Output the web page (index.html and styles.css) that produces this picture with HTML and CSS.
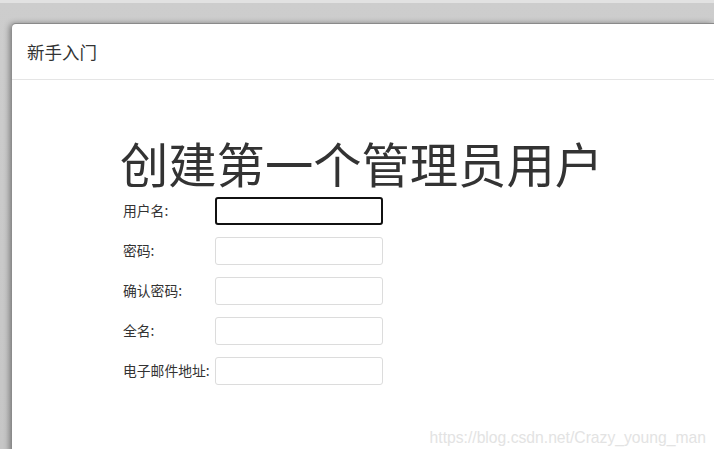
FILE: index.html
```html
<!DOCTYPE html>
<html lang="zh-CN">
<head>
<meta charset="utf-8">
<title>新手入门</title>
<link rel="stylesheet" href="styles.css">
</head>
<body>
<div class="window">
  <div class="header">新手入门</div>
  <div class="content">
    <h1 class="title">创建第一个管理员用户</h1>
    <form class="form">
      <div class="row"><label class="label">用户名:</label><input class="input focused" type="text"></div>
      <div class="row"><label class="label">密码:</label><input class="input" type="password"></div>
      <div class="row"><label class="label">确认密码:</label><input class="input" type="password"></div>
      <div class="row"><label class="label">全名:</label><input class="input" type="text"></div>
      <div class="row"><label class="label">电子邮件地址:</label><input class="input" type="text"></div>
    </form>
  </div>
  <div class="watermark">https://blog.csdn.net/Crazy_young_man</div>
</div>
</body>
</html>
```
FILE: styles.css
```css
html, body {
  margin: 0;
  height: 100%;
  overflow: hidden;
}
body {
  background: linear-gradient(#e2e2e2 0, #e2e2e2 3px, #cdcdcd 3px, #c6c6c6 100%);
  font-family: "Noto Sans CJK SC", "Liberation Sans", sans-serif;
  color: #333;
}
.window {
  position: relative;
  margin: 24px 0 0 12px;
  height: 430px;
  background: #fff;
  border-radius: 4px 0 0 0;
  box-shadow: 0 -1px 0 #8a8a8a, -2px 0 6px rgba(0, 0, 0, 0.45);
}
.header {
  height: 55px;
  line-height: 55px;
  padding-left: 15px;
  font-size: 17.5px;
  color: #333;
  border-bottom: 1px solid #e5e5e5;
}
.content {
  padding: 58px 0 0 108px;
}
.title {
  margin: 0 0 11px 0;
  font-size: 48.3px;
  font-weight: normal;
  line-height: 48px;
  color: #333;
}
.form {
  display: flex;
  flex-direction: column;
  gap: 12px;
}
.row {
  display: flex;
  align-items: center;
}
.label {
  width: 95px;
  padding-left: 3px;
  padding-bottom: 2px;
  box-sizing: border-box;
  font-size: 13.8px;
  color: #333;
}
.input {
  box-sizing: border-box;
  width: 168px;
  height: 28px;
  margin: 0;
  border: 1px solid #dcdcdc;
  border-radius: 3px;
  background: #fff;
  outline: none;
}
.input.focused {
  border: 2px solid #111;
}
.watermark {
  position: absolute;
  right: 8px;
  bottom: 7px;
  font-family: "Liberation Sans", Arial, sans-serif;
  font-size: 15.7px;
  color: #e3e3e3;
}
```
